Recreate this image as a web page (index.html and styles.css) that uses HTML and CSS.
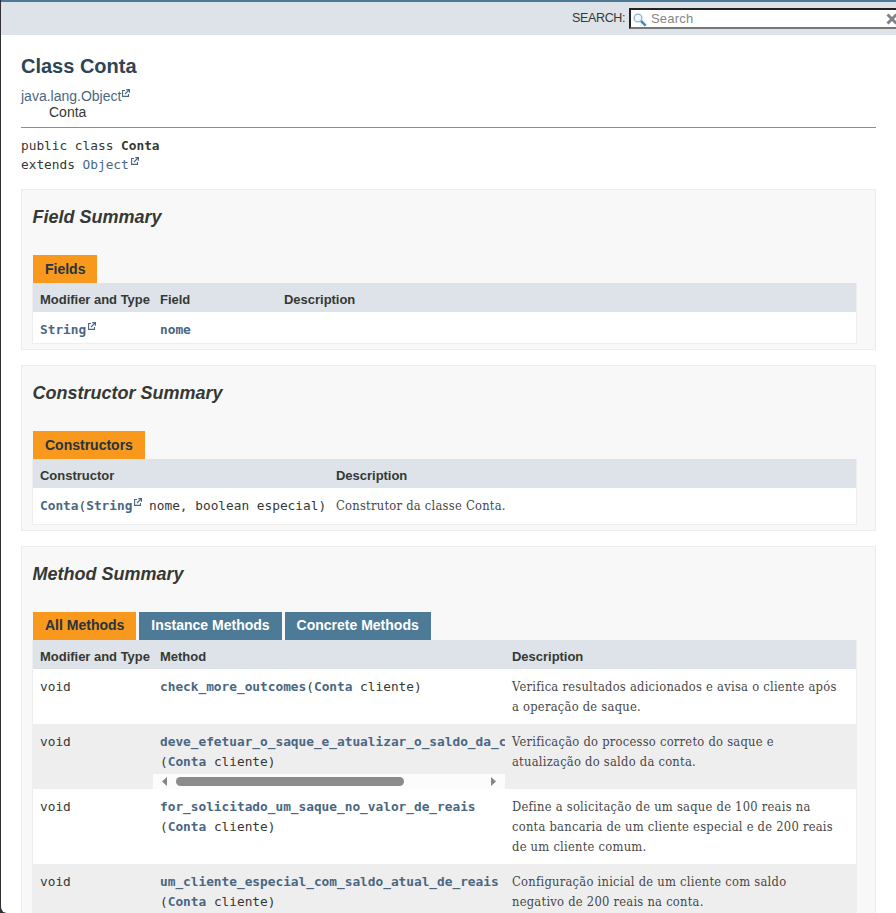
FILE: index.html
```html
<!DOCTYPE html>
<html lang="pt">
<head>
<meta charset="utf-8">
<title>Conta</title>
<link rel="stylesheet" href="styles.css">
</head>
<body>
<svg class="defs" width="0" height="0"><symbol id="ext" viewBox="0 0 8 8"><path d="M3 1.5H.6v5.9h5.9V5" fill="none" stroke="currentColor" stroke-width="1.1"/><path d="M3 5 6.8 1.2M4.3.6h3.1v3.1" fill="none" stroke="currentColor" stroke-width="1.2"/></symbol></svg>
<div class="window">
<header class="subnav">
  <label class="search-label">SEARCH:</label>
  <div class="search-box">
    <svg class="glass" width="14" height="14" viewBox="0 0 14 14"><circle cx="5" cy="5" r="3.9" fill="#eef6fb" stroke="#8db4cc" stroke-width="1.3"/><path d="m8 8 4.7 4.7" stroke="#3b8fc0" stroke-width="2.5"/></svg>
    <span class="placeholder">Search</span>
    <svg class="clear" width="12" height="12" viewBox="0 0 12 12"><path d="m1.5 1.5 9 9m0-9-9 9" stroke="#808388" stroke-width="3"/></svg>
  </div>
</header>
<main>
  <h1>Class Conta</h1>
  <div class="inheritance"><a>java.lang.Object<svg class="ext"><use href="#ext"/></svg></a><div class="child">Conta</div></div>
  <div class="signature">public class <b>Conta</b><br>extends <a>Object<svg class="ext"><use href="#ext"/></svg></a></div>

  <section class="summary">
    <h2>Field Summary</h2>
    <div class="tabs"><span class="tab active">Fields</span></div>
    <div class="table fields">
      <div class="row head"><div>Modifier and Type</div><div>Field</div><div>Description</div></div>
      <div class="row"><div class="code"><a>String<svg class="ext"><use href="#ext"/></svg></a></div><div class="code"><a>nome</a></div><div></div></div>
    </div>
  </section>

  <section class="summary">
    <h2>Constructor Summary</h2>
    <div class="tabs"><span class="tab active">Constructors</span></div>
    <div class="table constructors">
      <div class="row head"><div>Constructor</div><div>Description</div></div>
      <div class="row"><div class="code"><a>Conta</a>(<a>String<svg class="ext"><use href="#ext"/></svg></a> nome, boolean especial)</div><div class="desc">Construtor da classe Conta.</div></div>
    </div>
  </section>

  <section class="summary">
    <h2>Method Summary</h2>
    <div class="tabs switcher"><span class="tab active">All Methods</span><span class="tab">Instance Methods</span><span class="tab">Concrete Methods</span></div>
    <div class="table methods">
      <div class="row head"><div>Modifier and Type</div><div>Method</div><div>Description</div></div>
      <div class="row"><div class="code">void</div><div class="code"><a>check_more_outcomes</a>(<a>Conta</a> cliente)</div><div class="desc">Verifica resultados adicionados e avisa o cliente após<br>a operação de saque.</div></div>
      <div class="row alt"><div class="code">void</div><div class="code scroller"><div class="clip"><a>deve_efetuar_o_saque_e_atualizar_o_saldo_da_c</a><br>(<a>Conta</a> cliente)</div><div class="scrollbar"><svg width="5" height="9" viewBox="0 0 5 9"><path d="M5 0v9L0 4.500z" fill="#858585"/></svg><div class="track"><div class="thumb"></div></div><svg width="5" height="9" viewBox="0 0 5 9"><path d="M0 0v9l5-4.500z" fill="#858585"/></svg></div></div><div class="desc">Verificação do processo correto do saque e<br>atualização do saldo da conta.</div></div>
      <div class="row"><div class="code">void</div><div class="code"><a>for_solicitado_um_saque_no_valor_de_reais</a><br>(<a>Conta</a> cliente)</div><div class="desc">Define a solicitação de um saque de 100 reais na<br>conta bancaria de um cliente especial e de 200 reais<br>de um cliente comum.</div></div>
      <div class="row alt"><div class="code">void</div><div class="code"><a>um_cliente_especial_com_saldo_atual_de_reais</a><br>(<a>Conta</a> cliente)</div><div class="desc">Configuração inicial de um cliente com saldo<br>negativo de 200 reais na conta.</div></div>
    </div>
  </section>
</main>
</div>
</body>
</html>
```
FILE: styles.css
```css
* { box-sizing: border-box; }
html { background: #303036; }
body { margin: 0; height: 913px; overflow: hidden; font: 14px/16px "Liberation Sans", Arial, sans-serif; color: #353833; }
.defs { position: absolute; }
.window { height: 913px; margin-left: 1px; background: #fff; border-top: 2px solid #4d7a97; border-bottom-left-radius: 6px; overflow: hidden; }
a { color: #4a6782; }
.subnav { height: 33px; background: #dee3e9; display: flex; padding: 6px 0 0 571px; overflow: hidden; }
.search-label { width: 57px; flex: none; font-size: 12.5px; line-height: 21px; letter-spacing: -.35px; }
.search-box { width: 280px; flex: none; height: 21px; background: #fff; border: 2px solid; border-color: #222 #777 #777 #222; display: flex; align-items: center; padding-left: 2px; }
.glass { margin-top: 2px; flex: none; }
.placeholder { margin-left: 4px; width: 235px; font-size: 13px; color: #858585; letter-spacing: .2px; }
.clear { flex: none; }
main { padding: 20px 20px 0; }
h1 { margin: 0; font-size: 20px; line-height: 23px; color: #2c4557; }
.inheritance { margin-top: 10px; height: 40px; border-bottom: 1px solid #8e8e8e; }
.child { margin-left: 28px; }
.ext { width: 8px; height: 8px; margin-left: 1px; vertical-align: 4px; }
.signature, .code { font-family: "DejaVu Sans Mono", monospace; font-size: 12.8px; letter-spacing: -.008px; }
.signature { margin: 8px 0 15px; line-height: 19px; height: 38px; white-space: nowrap; }
.signature .ext, .code .ext { margin: 0 -1px 0 2px; }
.summary { border: 1px solid #ededed; background: #f8f8f8; padding: 0 18px 5px 11px; margin-bottom: 15px; }
h2 { margin: 0 0 0 -.5px; padding-top: 16px; height: 65px; font-size: 18px; line-height: 22px; font-style: italic; }
.tabs { display: flex; gap: 3px; height: 28px; }
.tab { font-weight: bold; line-height: 28px; padding: 0 12px; background: #4d7a97; color: #fff; white-space: nowrap; }
.switcher .tab { line-height: 26px; }
.tab.active { background: #f8981d; color: #253441; }
.table { border: 1px solid #eee; border-top: 0; margin-left: -1px; background: #fff; }
.row { display: grid; }
.row > div { padding: 8px 0 7px 7px; line-height: 20px; white-space: nowrap; min-width: 0; }
.row.head { background: #dee3e9; height: 29px; font-size: 13px; font-weight: bold; }
.row.head > div { padding: 8px 0 0 7px; line-height: 18px; letter-spacing: -.02px; }
.fields .row { grid-template-columns: 120px 124px 1fr; }
.fields .row:last-child { height: 31px; }
.fields a, .constructors a, .methods a { font-weight: bold; }
.constructors .row { grid-template-columns: 296px 1fr; }
.constructors .row:last-child { height: 36px; }
.methods .row { grid-template-columns: 120px 352px 1fr; }
.alt { background: #eeeeef; }
.desc { font-family: "DejaVu Serif Condensed", "DejaVu Serif", Georgia, serif; font-stretch: condensed; font-size: 12.8px; letter-spacing: .26px; color: #474747; }
.row > .scroller { padding: 8px 0 0; }
.clip { padding-left: 7px; overflow: hidden; height: 42px; }
.scrollbar { height: 15px; background: #fcfcfc; display: flex; align-items: center; padding: 0 9px; }
.track { flex: 1; padding: 0 9px; }
.thumb { width: 228px; height: 9px; border-radius: 5px; background: #8b8b8b; }
```
